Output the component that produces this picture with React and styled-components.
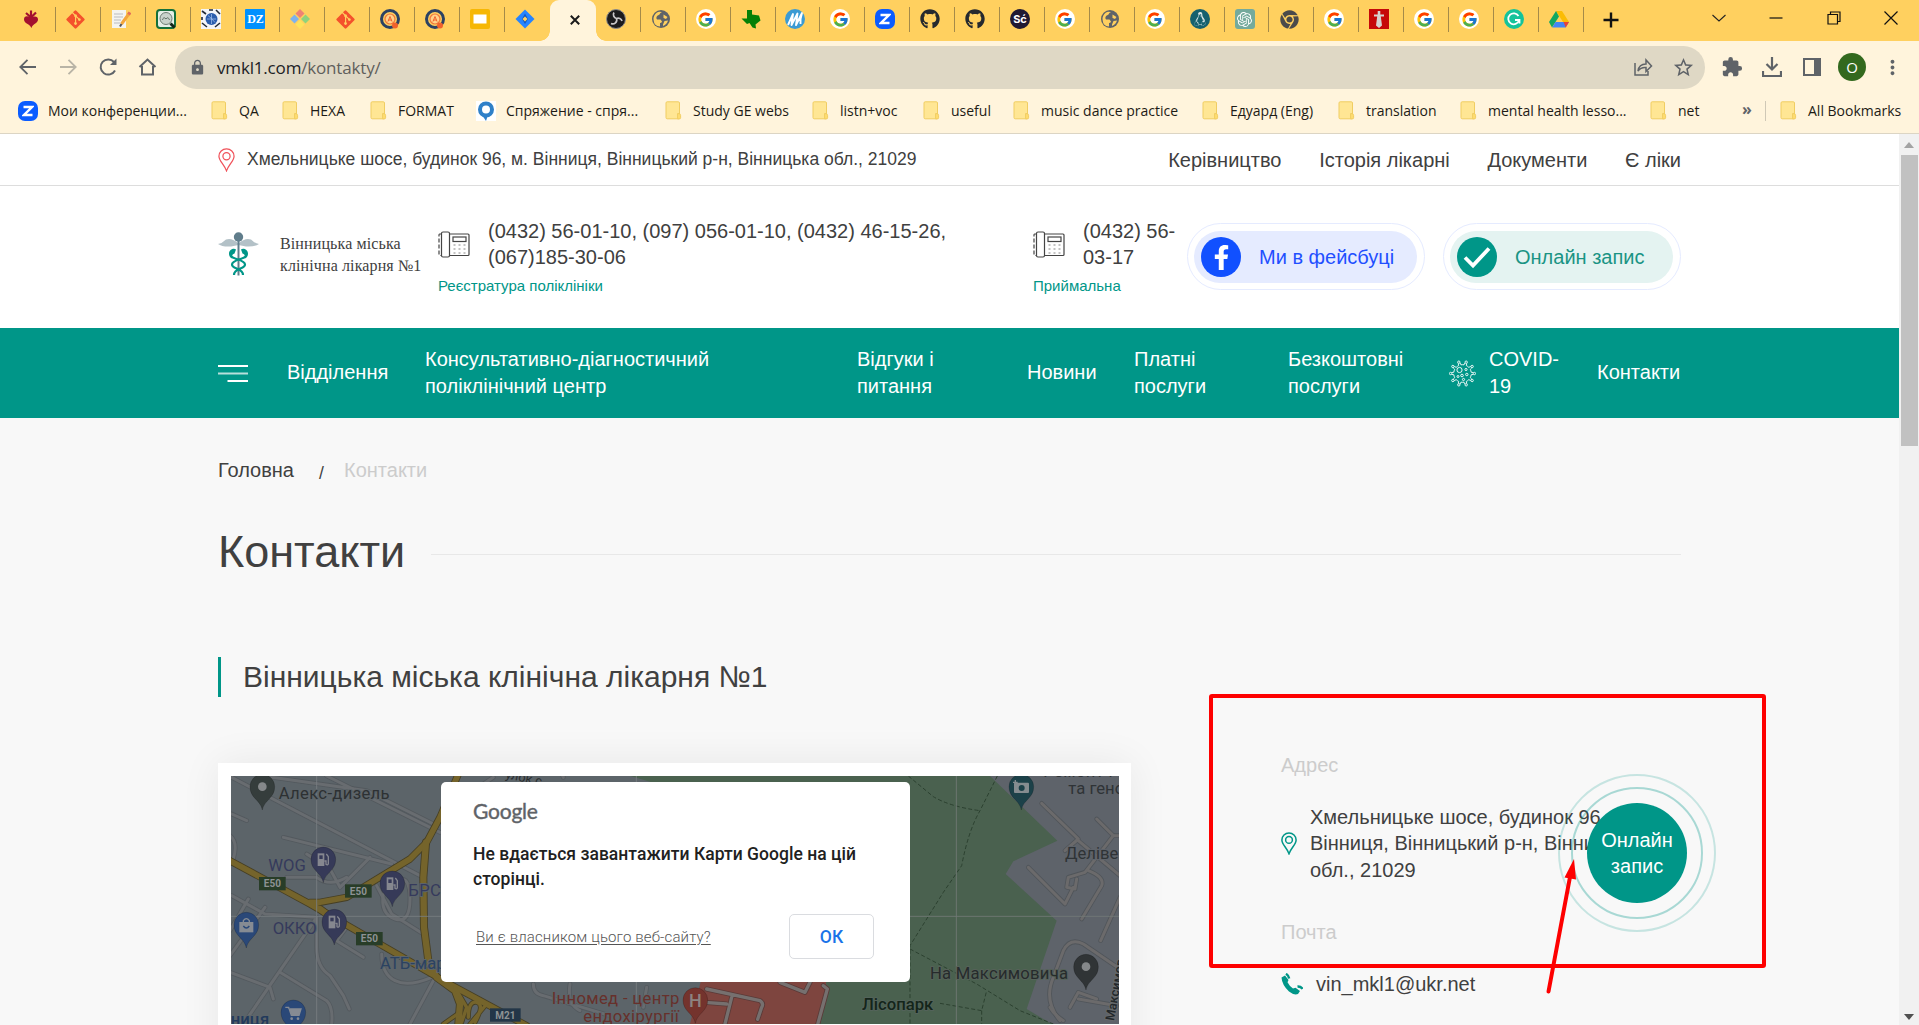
import React from "react";
import styled, { createGlobalStyle, css } from "styled-components";
import { FaGitAlt, FaGithub, FaChrome, FaLinux, FaFacebookF } from "react-icons/fa";
import { FcGoogle } from "react-icons/fc";
import { SiOpenai } from "react-icons/si";
import { MdExtension, MdLock, MdStarBorder, MdMoreVert } from "react-icons/md";

const teal = "#009688";
const ink = "#404040";
const sans = `"Liberation Sans", Arial, sans-serif`;
const chromeFont = `"Open Sans", "Noto Sans", sans-serif`;

const GlobalStyle = createGlobalStyle`
  *, *::before, *::after { box-sizing: border-box; }
  body { margin: 0; overflow: hidden; background: #f8f8f8; }
  svg { display: block; flex: none; }
`;

const Window = styled.div`
  position: relative;
  width: 1919px;
  height: 1025px;
  overflow: hidden;
  display: flex;
  flex-direction: column;
  font-family: ${sans};
  color: ${ink};
`;

/* ---------- browser frame ---------- */
const TabStrip = styled.div`
  height: 41px;
  flex: none;
  display: flex;
  padding-left: 11px;
  background: #ffd05f;
`;
const Tab = styled.div`
  width: 44.92px;
  flex: none;
  display: flex;
  align-items: center;
  justify-content: center;
  padding-right: 5px;
  height: 38px;
  position: relative;
  &::after {
    content: "";
    position: absolute;
    right: 0;
    top: 7px;
    width: 1px;
    height: 25px;
    background: ${(p) => (p.$plain ? "transparent" : "#a58a49")};
  }
`;
const ActiveTab = styled.div`
  width: 46px;
  flex: none;
  display: flex;
  align-items: center;
  justify-content: center;
  padding: 0 0 2px 5px;
  border-radius: 9px 9px 0 0;
  background: #fff4dc;
  position: relative;
  &::before, &::after {
    content: "";
    position: absolute;
    bottom: 0;
    width: 10px;
    height: 10px;
  }
  &::before { left: -10px; background: radial-gradient(circle at 0 0, transparent 9.5px, #fff4dc 10px); }
  &::after { right: -10px; background: radial-gradient(circle at 100% 0, transparent 9.5px, #fff4dc 10px); }
`;
const Disc = styled.span`
  width: 20px;
  height: 20px;
  display: flex;
  align-items: center;
  justify-content: center;
  border-radius: ${(p) => p.$r || "50%"};
  background: ${(p) => p.$bg || "#fff"};
  color: ${(p) => p.$fg || "#fff"};
  font: 700 ${(p) => p.$size || 11}px ${(p) => p.$font || "Inter, sans-serif"};
`;
const WindowControls = styled.div`
  flex: 1;
  display: flex;
  align-items: center;
  gap: 43.3px;
  padding: 0 21px 6px 19px;
`;
const NewTab = styled.div`padding: 5px 0 0 0; margin-right: auto;`;

const Toolbar = styled.div`
  height: 52px;
  flex: none;
  display: flex;
  align-items: center;
  background: #fff4dc;
  padding: 0 7px 0 16px;
`;
const NavButtons = styled.div`
  width: 159px;
  display: flex;
  gap: 16px;
  align-items: center;
`;
const Omnibox = styled.div`
  width: 1530px;
  height: 43px;
  border-radius: 22px;
  background: #dfd8c5;
  display: flex;
  align-items: center;
  padding: 0 10px 0 14px;
  font: 17px ${chromeFont};
  letter-spacing: -0.17px;
  color: #5f5f5c;
`;
const Url = styled.span`
  flex: 1;
  padding-left: 11px;
  b { font-weight: 400; color: #202124; }
`;
const OmniActions = styled.div`display: flex; gap: 18px; align-items: center;`;
const ToolActions = styled.div`
  flex: 1;
  display: grid;
  grid-template-columns: repeat(5, 40px);
  justify-content: end;
  align-items: center;
  justify-items: center;
`;
const Avatar = styled.span`
  width: 28px;
  height: 28px;
  border-radius: 50%;
  background: #33691e;
  color: #fff;
  display: flex;
  align-items: center;
  justify-content: center;
  font: 15px ${chromeFont};
`;

const BookmarksBar = styled.div`
  height: 41px;
  flex: none;
  display: flex;
  align-items: center;
  background: #fff4dc;
  border-bottom: 1px solid #dcd5c4;
  padding: 0 0 5px 18px;
`;
const Bookmark = styled.div`
  width: ${(p) => p.$w}px;
  flex: none;
  display: flex;
  align-items: center;
  gap: ${(p) => p.$gap || 11}px;
  white-space: nowrap;
  font: 14px ${chromeFont};
  letter-spacing: 0;
  color: #1d1b16;
`;
const Divider = styled.span`width: 1px; height: 20px; background: #cfc8b6; margin-right: 14px;`;
const Overflow = styled.span`
  width: 23px;
  font: 700 16px ${chromeFont};
  color: #5f6368;
  padding-bottom: 3px;
`;

/* ---------- page ---------- */
const Viewport = styled.div`flex: 1; display: flex; min-height: 0;`;
const Page = styled.div`width: 1899px; background: #f8f8f8; overflow: hidden;`;
const Scrollbar = styled.div`
  width: 20px;
  background: #f1f1f1;
  display: flex;
  flex-direction: column;
  align-items: center;
  justify-content: space-between;
  padding: 8px 0 5px 0;
`;
const Thumb = styled.div`width: 17px; height: 291px; background: #c1c1c1; margin: 7px 0 auto;`;

const wrap = css`width: 1463px; margin-left: 218px; display: flex;`;

const TopBar = styled.div`background: #fff; height: 52px; border-bottom: 1px solid #ddd;`;
const TopInner = styled.div`${wrap} align-items: center; height: 51px;`;
const TopAddress = styled.div`
  flex: 1;
  display: flex;
  align-items: center;
  gap: 12px;
  font-size: 17.5px;
`;
const TopLinks = styled.nav`display: flex; gap: 37.7px; font-size: 20px; line-height: 26px; white-space: nowrap; padding-top: 1px;`;

const Header = styled.header`background: #fff; height: 142px;`;
const HeaderInner = styled.div`${wrap} height: 142px;`;
const Logo = styled.div`
  width: 220px;
  display: flex;
  padding: 46px 0 0 0;
  gap: 21px;
  font: 16px/22px "Liberation Serif", "Times New Roman", serif;
  white-space: pre;
`;
const LogoText = styled.div`padding-top: 1px; letter-spacing: 0.12px;`;
const PhoneBlock = styled.div`width: ${(p) => p.$w}px; padding-top: 32px;`;
const PhoneRow = styled.div`
  display: flex;
  align-items: flex-start;
  gap: 18px;
  font-size: 20px;
  line-height: 26px;
  white-space: pre;
  svg { margin-top: 13px; }
`;
const PhoneLabel = styled.div`color: ${teal}; font-size: 15px; line-height: 20px; margin-top: 6px;`;
const Pills = styled.div`display: flex; gap: 18px; padding-top: 37px;`;
const PillRing = styled.a`
  width: 238px;
  height: 67px;
  border: 1px solid #e5ebff;
  border-radius: 34px;
  padding: 7px 7px 7px 6px;
`;
const Pill = styled.span`
  display: flex;
  align-items: center;
  gap: 18px;
  height: 52px;
  border-radius: 26px;
  padding-left: 7px;
  background: ${(p) => p.$bg};
  color: ${(p) => p.$fg};
  font-size: 20px;
  white-space: nowrap;
`;
const PillIcon = styled.span`
  width: 40px;
  height: 40px;
  border-radius: 50%;
  background: ${(p) => p.$bg};
  display: flex;
  align-items: center;
  justify-content: center;
  color: #fff;
`;

const MainNav = styled.nav`background: ${teal}; height: 90px;`;
const NavInner = styled.div`${wrap} height: 90px; align-items: center;`;
const NavItem = styled.a`
  width: ${(p) => p.$w}px;
  display: flex;
  align-items: center;
  gap: 13px;
  color: #fff;
  font-size: 20px;
  line-height: 27px;
  white-space: pre;
  padding-bottom: ${(p) => (p.$single ? 2 : 0)}px;
`;

const Crumbs = styled.div`
  ${wrap}
  padding-top: 39px;
  font-size: 20px;
  line-height: 26px;
`;
const CrumbHome = styled.a`width: 101px;`;
const CrumbSlash = styled.span`width: 25px; font-size: 17.5px; padding-top: 3px;`;
const CrumbHere = styled.span`color: #ccc;`;

const TitleRow = styled.div`
  ${wrap}
  align-items: center;
  height: 60px;
  margin-top: 36px;
  gap: 26px;
  &::after { content: ""; flex: 1; height: 1px; background: #e8e8e8; margin-top: 4px; }
`;
const Title = styled.h1`margin: 0; font-size: 45px; font-weight: 400; line-height: 60px;`;

const Columns = styled.div`${wrap} padding-top: 75px; justify-content: flex-start;`;
const Left = styled.section`width: 913px;`;
const Subtitle = styled.h2`
  margin: 0 0 66px;
  height: 40px;
  border-left: 3px solid ${teal};
  padding-left: 22px;
  font-size: 30px;
  font-weight: 400;
  line-height: 40px;
`;
const MapCard = styled.div`
  width: 913px;
  height: 400px;
  padding: 13px 12px 0 13px;
  background: #fff;
  box-shadow: 0 0 38px rgba(0, 0, 0, 0.07);
`;
const MapArea = styled.div`position: relative; width: 888px; height: 400px;`;
const Dialog = styled.div`
  position: absolute;
  left: 210px;
  top: 6px;
  width: 469px;
  height: 200px;
  border-radius: 5px;
  background: #fff;
  padding: 15px 36px 0 32px;
  font-family: Roboto, sans-serif;
`;
const GoogleWord = styled.div`font: 400 21px/28px Lato, sans-serif; color: #5f6368; -webkit-text-stroke: 0.4px #5f6368; letter-spacing: -0.2px;`;
const DialogText = styled.p`
  margin: 17px 0 0;
  font-size: 17.5px;
  font-weight: 500;
  line-height: 25px;
  letter-spacing: 0.03px;
  color: #212121;
  white-space: pre;
`;
const DialogFoot = styled.div`display: flex; justify-content: space-between; align-items: center; margin-top: 22px; padding-left: 3px;`;
const OwnerLink = styled.a`font-size: 15px; font-weight: 300; letter-spacing: 0.14px; color: #555; text-decoration: underline; text-underline-offset: 2px;`;
const OkButton = styled.button`
  width: 85px;
  height: 45px;
  border: 1px solid #dadce0;
  border-radius: 5px;
  background: #fff;
  color: #1a73e8;
  font: 500 17.5px Roboto, sans-serif;
`;

const Contacts = styled.aside`padding: 95px 0 0 150px; font-size: 20px; line-height: 26.5px; white-space: nowrap;`;
const Caption = styled.div`color: #ccc;`;
const ContactRow = styled.div`
  display: flex;
  align-items: center;
  gap: ${(p) => p.$gap}px;
  margin: ${(p) => p.$m};
  white-space: pre;
`;

/* ---------- floating layers ---------- */
const CallButton = styled.a`
  position: absolute;
  left: 1558px;
  top: 774px;
  width: 158px;
  height: 158px;
  border-radius: 50%;
  border: 2px solid rgba(0, 150, 136, 0.2);
  padding: 11px;
`;
const CallRing = styled.span`
  display: block;
  height: 132px;
  border-radius: 50%;
  border: 2px solid rgba(0, 150, 136, 0.32);
  padding: 14px;
`;
const CallDisc = styled.span`
  display: flex;
  align-items: center;
  justify-content: center;
  text-align: center;
  height: 100px;
  border-radius: 50%;
  background: ${teal};
  color: #fff;
  font-size: 20px;
  line-height: 26px;
  white-space: pre;
`;
const MarkBox = styled.div`
  position: absolute;
  left: 1209px;
  top: 694px;
  width: 557px;
  height: 274px;
  border: 4px solid #fe0000;
  border-radius: 3px;
`;
const Arrow = styled.svg`position: absolute; left: 1540px; top: 855px;`;

/* ---------- drawings ---------- */
const Svg = ({ s = 20, box = 20, children }) => (
  <svg width={s} height={s} viewBox={`0 0 ${box} ${box}`} fill="none">{children}</svg>
);
const Folder = () => (
  <svg width="17" height="19" viewBox="0 0 17 19">
    <rect x="1" y="0.8" width="13.5" height="17" rx="1.2" fill="#ffe694" stroke="#f0cd62" />
    <path d="M12.6 12.5q3-.5 3 2v2.2q0 1.2-1.3 1.2h-1.7z" fill="#ffdc70" stroke="#f0cd62" />
  </svg>
);
const Globe = () => (
  <Svg><circle cx="10" cy="10" r="9" fill="#5f6368" />
    <path d="M11 3q-2 .5-2.500 2.500L6 7q-1.500 2 0 3.500h3.500l1.500 2q-.5 1.500-2 1.500v3.500Q3 17 2.600 11L2.500 9Q3.500 4 8 2.800zM12.500 5.500l4 2.500-1.500 2-2.500-1zM12 15.500l1.500-3.500 3.500-.5q-1 3.500-5 5.500z" fill="#ffd05f" /></Svg>
);
const GoogleTab = () => <Disc><FcGoogle size={17} /></Disc>;
const Zoom = () => (
  <Disc $bg="#0b5cff" $r="7px" $size={16}><Svg s={12} box={12}><path d="M1.500 2H10L2 10H10.500" stroke="#fff" strokeWidth="2.400" /></Svg></Disc>
);
const AtIcon = () => (
  <Svg><circle cx="10" cy="10" r="8.500" stroke="#2c4263" strokeWidth="3" /><circle cx="10" cy="10" r="5" stroke="#f0783c" strokeWidth="1.200" fill="#ffd28a" />
    <path d="M8 12.500l2-5 2 5M8.700 11h2.700" stroke="#f0622c" /><circle cx="15" cy="16.500" r="3" fill="#f0622c" /></Svg>
);
const Beet = () => (
  <Svg><path d="M10 8q7-2 7 2.500c0 4-5 3.500-6.500 8.500C9 15 3 14.500 3 10.500S6 7 10 8z" fill="#a3102f" /><path d="M10 8.500V1.500M9.500 8L5 4M10.500 8l4.500-4.500" stroke="#a3102f" strokeWidth="2.200" /></Svg>
);
const Notepad = () => (
  <Svg><rect x="1" y="1" width="14" height="18" fill="#f4f4f0" /><path d="M3 5h9M3 8h9M3 11h7M3 14h6" stroke="#b9bcc0" strokeWidth="1.200" /><path d="M18.500 4l-8 11" stroke="#f4a63a" strokeWidth="3" /><path d="M10.500 15l-1.500 2.500" stroke="#555" strokeWidth="2" /><path d="M17.500 5.500l1.500-2.200" stroke="#e36d5a" strokeWidth="3.200" /></Svg>
);
const Inspector = () => (
  <Svg><rect x="1" y="1" width="18" height="18" rx="3" fill="#e6efe8" stroke="#16703b" strokeWidth="2" /><circle cx="10" cy="9.500" r="6" fill="#c9d3cc" stroke="#6f7d74" /><path d="M6.500 11q1-4 3.500-1 2-3 3.500 1" stroke="#65736a" /><path d="M14.500 14.500l4 4" stroke="#14261b" strokeWidth="3" /></Svg>
);
const Mosaic = () => (
  <Svg><rect width="20" height="20" fill="#f3f5f8" /><path d="M1 2l4 3M15 1l4 4M1 14l5 4M14 18l5-4M8 1h4M1 8v3" stroke="#222a36" strokeWidth="1.600" /><circle cx="10.500" cy="10" r="6" fill="#2a5dad" /><path d="M6 10h9M10.500 5v10M7 6.500q4 3 7 7" stroke="#a9c6ef" strokeWidth=".7" /></Svg>
);
const Windows = () => (
  <Svg><path d="M10 0l4.500 4.500L10 9 5.500 4.500z" fill="#ef8275" /><path d="M15.500 5.500L20 10l-4.500 4.500L11 10z" fill="#8fd37c" /><path d="M4.500 5.500L9 10l-4.500 4.500L0 10z" fill="#7eb2ee" /><path d="M10 11l4.500 4.500L10 20l-4.500-4.500z" fill="#ffe25a" /></Svg>
);
const Slides = () => (<Svg><rect width="20" height="20" rx="2" fill="#f6b704" /><rect x="3.500" y="5.500" width="13" height="9" fill="#fff" /></Svg>);
const Jira = () => (
  <Svg><path d="M10 .5L19.500 10 10 19.500.5 10z" fill="#2684ff" /><path d="M10 4.500l3 5.500-3 5-3-5z" fill="#1558bc" /><path d="M10 7.500l2.500 2.500L10 12.500 7.500 10z" fill="#ffd05f" /></Svg>
);
const Obs = () => (
  <Svg><circle cx="10" cy="10" r="9.500" fill="#1c1b1d" stroke="#8b8a8b" /><path d="M8 3.500a4 4 0 0 0 2.500 6M16 12a4 4 0 0 0-5.500-2.500M5 14.500a4 4 0 0 0 5.500-5" stroke="#c9c7c9" strokeWidth="1.700" /></Svg>
);
const Texas = () => (<Svg><path d="M6 1h5v4.500l7 1 1.500 5-5 4 .5 4-3.500-1-3-4.500-2.500 1L.5 9.500H6z" fill="#068006" /></Svg>);
const Wave = () => (
  <Svg><circle cx="10" cy="10" r="10" fill="#3b9bd4" /><path d="M3 16L8 5 6.500 16 12.500 4.500 11 16 17 4q-2 6-1.500 11" stroke="#fff" strokeWidth="1.900" strokeLinejoin="round" /></Svg>
);
const Cross = () => (<Svg><rect width="20" height="20" fill="#c60808" /><path d="M8.700 2h2.600v3.500H15v2h-3.200l1.200 9-3 2.500-3-2.500 1.200-9H5v-2h3.700z" fill="#d6d2cf" /></Svg>);
const Grammar = () => (
  <Svg><circle cx="10" cy="10" r="10" fill="#15c39a" /><path d="M14.500 7A5.500 5.500 0 1 0 15 11.500" stroke="#fff" strokeWidth="1.800" /><path d="M15.500 14.500v-3.500H11" stroke="#fff" strokeWidth="1.800" /></Svg>
);
const Drive = () => (
  <Svg><path d="M7 2h6l7 11h-6z" fill="#fbbc04" /><path d="M7 2l3 5.500L3 18.500 0 13z" fill="#11a861" /><path d="M6.500 13H20l-3.300 5.500H3.200z" fill="#4285f4" /><path d="M14.500 13H20l-3.300 5.500z" fill="#ea4335" /></Svg>
);
const Penguin = () => <Disc $bg="#16616e" $fg="#0a1013"><FaLinux size={14} color="#dfe9ea" /></Disc>;
const OpenAiTab = () => <Disc $bg="#74aa9c" $r="3px"><SiOpenai size={15} /></Disc>;

const Pin = ({ w, h, color, sw = 1.3 }) => (
  <svg width={w} height={h} viewBox="0 0 18 25" fill="none" stroke={color} strokeWidth={sw}>
    <path d="M9 24C6.500 17 1 13.500 1 8.500a8 7.800 0 0 1 16 0C17 13.500 11.500 17 9 24z" /><ellipse cx="9" cy="8.500" rx="3.800" ry="3.800" />
  </svg>
);
const Caduceus = () => (
  <svg width="41" height="44" viewBox="0 0 41 44" fill="none">
    <path d="M0 12Q4 11.500 8 7.500q6-2 12.500 4Q27 5.500 33 7.500q4 4 8 4.500-4 3-13 2.500L20.500 13 13 14.500Q4 15 0 12z" fill="#b3c1c7" />
    <path d="M20.500 5v38.500" stroke="#607d8b" strokeWidth="2" /><circle cx="20.500" cy="5" r="4.700" fill="#607d8b" />
    <path d="M18 17.500c-2-2-7 0-7 4 0 3 1.500 4 3 5 0-3 0-4 2.500-5z" fill={teal} /><path d="M23 17.500c2-2 7 0 7 4 0 3-1.500 4-3 5 0-3 0-4-2.500-5z" fill={teal} />
    <path d="M13 24c2 3.500 14 3.500 14 8.500s-11 3-11 10.500M28 24c-2 3.500-14 3.500-14 8.500s11 3 11 10.500" stroke={teal} strokeWidth="2.200" />
  </svg>
);
const DeskPhone = () => (
  <svg width="32" height="27" viewBox="0 0 32 27" fill="none" stroke="#444" strokeWidth="1.200">
    <rect x="3.500" y="1" width="8" height="25" rx="1.500" /><path d="M11.500 3H30q1 0 1 1v19.500q0 1-1 1H11.500" />
    <path d="M3 3H1.500Q1 3 1 4v19.500q0 1 1 1h1.500" strokeDasharray="4 2" /><rect x="15" y="6" width="13" height="4.500" />
    <path d="M15.500 14h12M15.500 18h12M15.500 22h12" stroke="#888" strokeDasharray="2 3" />
  </svg>
);
const Virus = () => (
  <svg width="27" height="27" viewBox="0 0 27 27" fill="none" stroke="#fff" strokeWidth="0.9">
    {Array.from({ length: 10 }, (_, i) => {
      const at = (deg, r) => {
        const a = ((i * 36 + deg) * Math.PI) / 180;
        return `${13.5 + r * Math.cos(a)} ${13.5 + r * Math.sin(a)}`;
      };
      const [kx, ky] = at(0, 11.9).split(" ");
      return (
        <g key={i}>
          <path d={`M${at(-5, 10.8)}L${at(-8, 8.8)}A9 9 0 0 0 ${at(-28, 8.8)}L${at(-31, 10.8)}`} />
          <circle cx={kx} cy={ky} r="1.200" />
        </g>
      );
    })}
    <circle cx="10.500" cy="10" r="2.600" /><circle cx="17" cy="9.500" r="1.100" /><circle cx="13" cy="15.500" r="1.300" /><circle cx="17.800" cy="14.500" r="1.200" /><circle cx="9" cy="16.500" r="1" /><circle cx="14.500" cy="19.500" r="1.100" />
  </svg>
);
const Burger = () => (
  <svg width="30" height="17" viewBox="0 0 30 17"><path d="M0 1h30M9.500 16H30" stroke="#fff" strokeWidth="2" /><path d="M0 8.500h30" stroke="#b7dfdb" strokeWidth="2" /></svg>
);

const MapPin = ({ x, y, fill, children }) => (
  <g transform={`translate(${x} ${y})`}>
    <path d="M0 70C-5 40-37 35-37 0a37 37 0 0 1 74 0C37 35 5 40 0 70z" fill={fill} stroke="rgba(0,0,0,.25)" strokeWidth="2" />{children}
  </g>
);
const Pump = () => (
  <g><rect x="-17" y="-18" width="20" height="38" fill="#85878f" /><rect x="-12" y="-12" width="10" height="11" fill="#363a58" /><path d="M3 5h5v10q5 4 7-2V-8l-6-8" stroke="#85878f" strokeWidth="4" fill="none" /></g>
);
const Shield = ({ x, y, w = 80, fill = "#283d28", children }) => (
  <g><rect x={x} y={y} width={w} height="40" fill={fill} /><text x={x + w / 2} y={y + 31} textAnchor="middle" fontSize="30" fontWeight="700" fill="#8d9294">{children}</text></g>
);
const Label = ({ x, y, fill, size = 50, halo = "#5c6469", weight = 400, ls = 0, children, ...rest }) => (
  <text x={x} y={y} fill={fill} fontSize={size} fontWeight={weight} letterSpacing={ls} stroke={halo} strokeWidth="6" strokeLinejoin="round" paintOrder="stroke" {...rest}>{children}</text>
);

const minorLeft = [
  "M65 70L160 120 640 370", "M160 66L470 110 680 215", "M220 250L545 330", "M350 66L690 235", "M60 245q25 20 10 70",
  "M65 180L110 200", "M480 310L390 400 360 345 290 300", "M640 540L545 480 500 395", "M65 425l100 55 155 10", "M115 435L60 530", "M165 460L60 605",
  "M320 490L210 650 100 810", "M320 490v90q0 60 40 85l40 60 18 40", "M210 655L350 740q20 20 15 70", "M60 655l120 45 10 35", "M410 520l-30 40 80 50",
  "M515 600q0 60 40 80t110-10", "M670 680L600 810", "M520 420q-10 60 35 75t45-60-40-55", "M230 370h90q40 30 90 0", "M850 70l-30 20 M1060 70q-10-20 0-4",
  "M970 690q0 30 30 35l200 60", "M1080 690q-10 60 30 80", "M1310 700l-10 60",
];
const minorRight = [
  "M1085 148L1195 255 1155 290", "M1250 195L1300 245 1215 355 1165 370 1160 400 1185 405 1190 375", "M1300 245h20", "M1195 260L1320 365",
  "M1045 340L1155 450 1180 400", "M1225 350q50 20 40 45L1205 495", "M1320 430L1262 560", "M1140 800q-50-60-20-130l30-80q20-40 60-20l110 75",
  "M1110 760q10 20 40 40", "M1170 760L1195 715 1250 735", "M1195 735l115 20",
];
const MapDrawing = () => (
  <svg width="888" height="248" viewBox="231 777 888 248" fontFamily="Roboto, sans-serif">
    <rect x="231" y="777" width="888" height="248" fill="#5c6469" />
    <g transform="translate(680 755) scale(.33333)" fill="none">
      <path d="M-148 66H1320V810H400L0 600V110z" fill="#4a614f" />
      <path d="M930 66l202 194-132 62-23 38 153 140-90 265 75 45H1320V66z" fill="#5e636a" />
      <path d="M62 684H438v8l6 10-34 108H0V684z" fill="#7e453f" />
      <path d="M0 684H62L30 810H0z" fill="#5c6469" />
      <g strokeLinejoin="round" strokeLinecap="round">
        {["M75 745l65 5M80 705l160 35q12 8 5 20l-12 36M155 730l-20 80M300 685l75 30 15-30M430 695l12 10-30 110"].map((d) => (
          <g key={d}><path d={d} stroke="#5a3a38" strokeWidth="15" /><path d={d} stroke="#76706f" strokeWidth="10" /></g>
        ))}
        {minorRight.map((d) => <path key={d} d={d} stroke="#50555a" strokeWidth="14" />)}
        {minorRight.map((d) => <path key={d} d={d} stroke="#6b6a6b" strokeWidth="9" />)}
      </g>
      <path d="M685 66l75 62q50 30 140 42M952 66L900 170q-35 60-55 165L790 415 690 575 690 810M690 585l200 105 130 80 100 40M780 748l125 22 15-60M905 770v40" stroke="#2b402f" strokeWidth="3" strokeDasharray="12 7" />
      <path d="M829 66V810M689 487H1317" stroke="#727a77" strokeWidth="2.500" />
      <MapPin x={1024} y={98} fill="#1c4149"><rect x="-22" y="-12" width="45" height="31" rx="3" fill="#858c90" /><circle cx="1" cy="4" r="9" fill="#1c4149" /><path d="M-18-20v14M-25-13h14" stroke="#858c90" strokeWidth="4" /></MapPin>
      <MapPin x={1218} y={638} fill="#303436"><circle r="13" fill="#85888a" /></MapPin>
      <MapPin x={46} y={738} fill="#74332d"><text y="21" fontSize="54" fontWeight="500" textAnchor="middle" fill="#8d8380">H</text></MapPin>
      <Label x={1090} y={68} fill="#2f3336" halo="#5e636a" ls={1}>Ремонт г</Label>
      <Label x={1165} y={120} fill="#2f3336" halo="#5e636a">та гено</Label>
      <Label x={1155} y={315} fill="#2f3336" halo="#5e636a">Деліве</Label>
      <Label x={750} y={675} fill="#262b2c" halo="#566259" ls={0.7}>На Максимовича</Label>
      <Label x={546} y={767} fill="#14251a" halo="#53635a" weight={500}>Лісопарк</Label>
      <Label x={0} y={0} fill="#22272a" halo="#666a6d" size={38} weight={500} transform="translate(1302 802) rotate(-80)">Максимов</Label>
    </g>
    <g transform="translate(210 755) scale(.33333)" fill="none">
      <g strokeLinecap="round" strokeLinejoin="round">
        {minorLeft.map((d) => <path key={d} d={d} stroke="#53595e" strokeWidth="14" />)}
        {minorLeft.map((d) => <path key={d} d={d} stroke="#686c70" strokeWidth="9" />)}
        {[["#463f24", 0], ["#75642b", -5]].map(([c, k]) => (
          <g key={c} stroke={c}>
            <path d="M745 60L690 190 650 265 600 315 410 430 330 445 300 445M60 320L300 450 700 680 950 815" strokeWidth={22 + k} />
            <path d="M648 265L640 370 642 520 655 620 680 670 735 710 750 750 745 810M350 480l-20-15" strokeWidth={24 + k} />
            <path d="M735 700l35 60-15 45M700 810l50-35M775 790q0-50 25-45t-5 60M830 750l-50 60" strokeWidth={15 + k} />
          </g>
        ))}
      </g>
      <path d="M320 66V810M1279 66V810M63 487H700" stroke="#787e82" strokeWidth="2.500" />
      <Shield x={147} y={369}>E50</Shield><Shield x={405} y={391}>E50</Shield><Shield x={438} y={534}>E50</Shield>
      <Shield x={840} y={763} w={92} fill="#233648">M21</Shield>
      <Label x={206} y={136} fill="#2d3133" ls={1}>Алекс-дизель</Label>
      <Label x={175} y={352} fill="#353a5c">WOG</Label>
      <Label x={595} y={426} fill="#353a5c" ls={1}>БРСМ</Label>
      <Label x={188} y={540} fill="#353a5c">ОККО</Label>
      <Label x={510} y={645} fill="#2b4261" ls={0}>АТБ-маркет</Label>
      <Label x={34} y={812} fill="#223a5c" weight={500}>нниця</Label>
      <Label x={1025} y={750} fill="#67302b" ls={1}>Інномед - центр</Label>
      <Label x={1120} y={804} fill="#67302b" ls={1}>ендохірургії</Label>
      <Label x={0} y={0} size={38} fill="#2a2e30" transform="translate(885 72) rotate(12)">улок с</Label>
      <MapPin x={157} y={98} fill="#353d3c"><circle r="13" fill="#85888a" /></MapPin>
      <MapPin x={340} y={316} fill="#363a58"><Pump /></MapPin>
      <MapPin x={547} y={388} fill="#363a58"><Pump /></MapPin>
      <MapPin x={373} y={503} fill="#363a58"><Pump /></MapPin>
      <MapPin x={109} y={512} fill="#2a4878"><rect x="-21" y="-8" width="42" height="31" fill="#868b93" /><path d="M-9-6v-6q9-12 18 0v6" stroke="#868b93" strokeWidth="4" /><path d="M-9 4q9 12 18 0" stroke="#2a4878" strokeWidth="4" /></MapPin>
      <MapPin x={250} y={775} fill="#2a4878"><path d="M-24-15h10l8 24h23l6-19h-33" stroke="#868b93" strokeWidth="4" fill="#868b93" /><circle cx="-5" cy="19" r="4" fill="#868b93" /><circle cx="14" cy="19" r="4" fill="#868b93" /></MapPin>
    </g>
  </svg>
);

/* ---------- data ---------- */
const Git = () => <FaGitAlt size={21} color="#f4512c" />;
const Hub = () => <FaGithub size={20} color="#25292e" />;
const tabsBefore = [Beet, Git, Notepad, Inspector, Mosaic,
  () => <Disc $bg="#0091ff" $r="1px" $size={12} $font="'Liberation Serif', serif">DZ</Disc>,
  Windows, Git, AtIcon, AtIcon, Slides, Jira];
const tabsAfter = [Obs, Globe, GoogleTab, Texas, Wave, GoogleTab, Zoom, Hub, Hub,
  () => <Disc $bg="#211a33" $size={11}>Sć</Disc>,
  GoogleTab, Globe, GoogleTab, Penguin, OpenAiTab, () => <FaChrome size={19} color="#4b4b4b" />, GoogleTab, Cross, GoogleTab, GoogleTab, Grammar, Drive];

const Chat = () => (
  <Svg><rect width="20" height="20" fill="#fff" /><circle cx="10" cy="8.500" r="6" stroke="#2f80c8" strokeWidth="4" /><path d="M6 14l4 6 2-6z" fill="#2f80c8" /></Svg>
);
const bookmarks = [
  { icon: <Zoom />, text: "Мои конференции...", w: 193, gap: 10 },
  { text: "QA", w: 71 }, { text: "HEXA", w: 88 }, { text: "FORMAT", w: 106 },
  { icon: <Chat />, text: "Спряжение - спря...", w: 189, gap: 10 },
  { text: "Study GE webs", w: 147 }, { text: "listn+voc", w: 111 }, { text: "useful", w: 90 },
  { text: "music dance practice", w: 189 }, { text: "Едуард (Eng)", w: 136 }, { text: "translation", w: 122 },
  { text: "mental health lesso...", w: 190 }, { text: "net", w: 92 },
];
const navItems = [
  ["Відділення", 138], ["Консультативно-діагностичний\nполіклінічний центр", 432], ["Відгуки і\nпитання", 170],
  ["Новини", 107], ["Платні\nпослуги", 154], ["Безкоштовні\nпослуги", 161],
];

export default function App() {
  return (
    <Window>
      <GlobalStyle />
      <TabStrip>
        {tabsBefore.map((Icon, i) => <Tab key={i} $plain={i === 11}><Icon /></Tab>)}
        <ActiveTab><Svg s={10} box={10}><path d="M.8.8l8.400 8.400M9.200.8L.8 9.200" stroke="#1a1a1a" strokeWidth="2" /></Svg></ActiveTab>
        {tabsAfter.map((Icon, i) => <Tab key={i}><Icon /></Tab>)}
        <WindowControls>
          <NewTab><Svg s={16} box={16}><path d="M8 .5v15M.5 8h15" stroke="#111" strokeWidth="2.400" /></Svg></NewTab>
          <Svg s={14} box={14}><path d="M.5 4L7 10l6.500-6" stroke="#222" strokeWidth="1.100" /></Svg>
          <Svg s={14} box={14}><path d="M.5 7h13" stroke="#111" strokeWidth="1.200" /></Svg>
          <Svg s={14} box={14}><path d="M1 3.500h9.500V13H1zM3.500 3.500V1H13v9.500h-2.500" stroke="#111" strokeWidth="1.200" /></Svg>
          <Svg s={14} box={14}><path d="M.5.5l13 13M13.500.5l-13 13" stroke="#111" strokeWidth="1.200" /></Svg>
        </WindowControls>
      </TabStrip>
      <Toolbar>
        <NavButtons>
          <Svg s={24} box={24}><path d="M20 12H4.500M11.500 4.800L4.300 12l7.200 7.200" stroke="#5f6368" strokeWidth="1.800" /></Svg>
          <Svg s={24} box={24}><path d="M4 12h15.500M12.500 4.800l7.200 7.200-7.200 7.200" stroke="#b9b4a6" strokeWidth="1.800" /></Svg>
          <Svg s={24} box={24}><path d="M19 15.500A7.600 7.600 0 1 1 18 7" stroke="#5f6368" strokeWidth="2" /><path d="M20.500 3.500V10H14z" fill="#5f6368" /></Svg>
          <Svg s={24} box={24}><path d="M3.500 12L11.500 4.500l8 7.500M6 11v8.500h11V11" stroke="#5f6368" strokeWidth="2" /></Svg>
        </NavButtons>
        <Omnibox>
          <MdLock size={17} color="#5f6368" />
          <Url><b>vmkl1.com</b>/kontakty/</Url>
          <OmniActions>
            <Svg s={22} box={22}><path d="M3 7v12h13v-4M6 15q1-7 8-7V4l5.500 6-5.500 5.500v-4Q9 11 6 15z" stroke="#5f6368" strokeWidth="1.500" /></Svg>
            <MdStarBorder size={23} color="#5f6368" />
          </OmniActions>
        </Omnibox>
        <ToolActions>
          <MdExtension size={22} color="#5f6368" />
          <Svg s={20} box={20}><path d="M10 0v12M4.500 7L10 12.500 15.500 7M1 14v5h18v-5" stroke="#5f6368" strokeWidth="2.200" /></Svg>
          <Svg s={18} box={18}><rect x="1" y="1" width="16" height="16" stroke="#5f6368" strokeWidth="2" /><path d="M11 1h6v16h-6z" fill="#5f6368" /></Svg>
          <Avatar>О</Avatar>
          <MdMoreVert size={23} color="#5f6368" />
        </ToolActions>
      </Toolbar>
      <BookmarksBar>
        {bookmarks.map((b) => (
          <Bookmark key={b.text} $w={b.w} $gap={b.gap}>{b.icon || <Folder />}{b.text}</Bookmark>
        ))}
        <Overflow>»</Overflow>
        <Divider />
        <Bookmark $w={130}><Folder />All Bookmarks</Bookmark>
      </BookmarksBar>

      <Viewport>
        <Page>
          <TopBar>
            <TopInner>
              <TopAddress><Pin w={17} h={24} color="#f0525a" /><span>Хмельницьке шосе, будинок 96, м. Вінниця, Вінницький р-н, Вінницька обл., 21029</span></TopAddress>
              <TopLinks><a>Керівництво</a><a>Історія лікарні</a><a>Документи</a><a>Є ліки</a></TopLinks>
            </TopInner>
          </TopBar>
          <Header>
            <HeaderInner>
              <Logo><Caduceus /><LogoText>{"Вінницька міська\nклінічна лікарня №1"}</LogoText></Logo>
              <PhoneBlock $w={595}>
                <PhoneRow><DeskPhone />{"(0432) 56-01-10, (097) 056-01-10, (0432) 46-15-26,\n(067)185-30-06"}</PhoneRow>
                <PhoneLabel>Реєстратура поліклініки</PhoneLabel>
              </PhoneBlock>
              <PhoneBlock $w={154}>
                <PhoneRow><DeskPhone />{"(0432) 56-\n03-17"}</PhoneRow>
                <PhoneLabel>Приймальна</PhoneLabel>
              </PhoneBlock>
              <Pills>
                <PillRing><Pill $bg="#e5ebff" $fg="#1f4fff"><PillIcon $bg="#1150ff"><FaFacebookF size={25} /></PillIcon>Ми в фейсбуці</Pill></PillRing>
                <PillRing><Pill $bg="#e4f3f1" $fg="#1a9484"><PillIcon $bg={teal}>
                  <Svg s={28} box={28}><path d="M2 14.500l8 8L26 5.500" stroke="#fff" strokeWidth="3.800" /></Svg>
                </PillIcon>Онлайн запис</Pill></PillRing>
              </Pills>
            </HeaderInner>
          </Header>
          <MainNav>
            <NavInner>
              <NavItem $w={69}><Burger /></NavItem>
              {navItems.map(([t, w]) => <NavItem key={t} $w={w} $single={!t.includes("\n")}>{t}</NavItem>)}
              <NavItem $w={148}><Virus />{"COVID-\n19"}</NavItem>
              <NavItem $w={84} $single>Контакти</NavItem>
            </NavInner>
          </MainNav>
          <Crumbs><CrumbHome>Головна</CrumbHome><CrumbSlash>/</CrumbSlash><CrumbHere>Контакти</CrumbHere></Crumbs>
          <TitleRow><Title>Контакти</Title></TitleRow>
          <Columns>
            <Left>
              <Subtitle>Вінницька міська клінічна лікарня №1</Subtitle>
              <MapCard>
                <MapArea>
                  <MapDrawing />
                  <Dialog>
                    <GoogleWord>Google</GoogleWord>
                    <DialogText>{"Не вдається завантажити Карти Google на цій\nсторінці."}</DialogText>
                    <DialogFoot><OwnerLink>Ви є власником цього веб-сайту?</OwnerLink><OkButton>ОК</OkButton></DialogFoot>
                  </Dialog>
                </MapArea>
              </MapCard>
            </Left>
            <Contacts>
              <Caption>Адрес</Caption>
              <ContactRow $gap={13} $m="25px 0 36px">
                <Pin w={16} h={23} color={teal} sw={1.7} />{"Хмельницьке шосе, будинок 96, м.\nВінниця, Вінницький р-н, Вінницька\nобл., 21029"}
              </ContactRow>
              <Caption>Почта</Caption>
              <ContactRow $gap={13} $m="25px 0 0">
                <svg width="22" height="22" viewBox="0 0 22 22" fill={teal}><path d="M.5 4.500L4 2.500l3.500 4.500-1 2.300q2 4 5.500 6.200l2.500-.8 4.500 3.300-2 3Q13 22.500 8 18.500 1 12 .5 4.500z" /><path d="M5 .8q2.500 1.500 3.200 4.700M16.500 13.500q3.500-.2 5 2.500" stroke={teal} strokeWidth="2.400" fill="none" /></svg>
                vin_mkl1@ukr.net
              </ContactRow>
            </Contacts>
          </Columns>
        </Page>
        <Scrollbar>
          <svg width="10" height="6" viewBox="0 0 10 6"><path d="M5 0l5 6H0z" fill="#a3a3a3" /></svg>
          <Thumb />
          <svg width="10" height="6" viewBox="0 0 10 6"><path d="M5 6L0 0h10z" fill="#505050" /></svg>
        </Scrollbar>
      </Viewport>

      <CallButton><CallRing><CallDisc>{"Онлайн\nзапис"}</CallDisc></CallRing></CallButton>
      <MarkBox />
      <Arrow width="45" height="142" viewBox="0 0 45 142">
        <path d="M8.500 136.500L30 22" stroke="#fe0000" strokeWidth="4" strokeLinecap="round" /><path d="M34 4L24.500 22.500l11.500 2z" fill="#fe0000" />
      </Arrow>
    </Window>
  );
}
